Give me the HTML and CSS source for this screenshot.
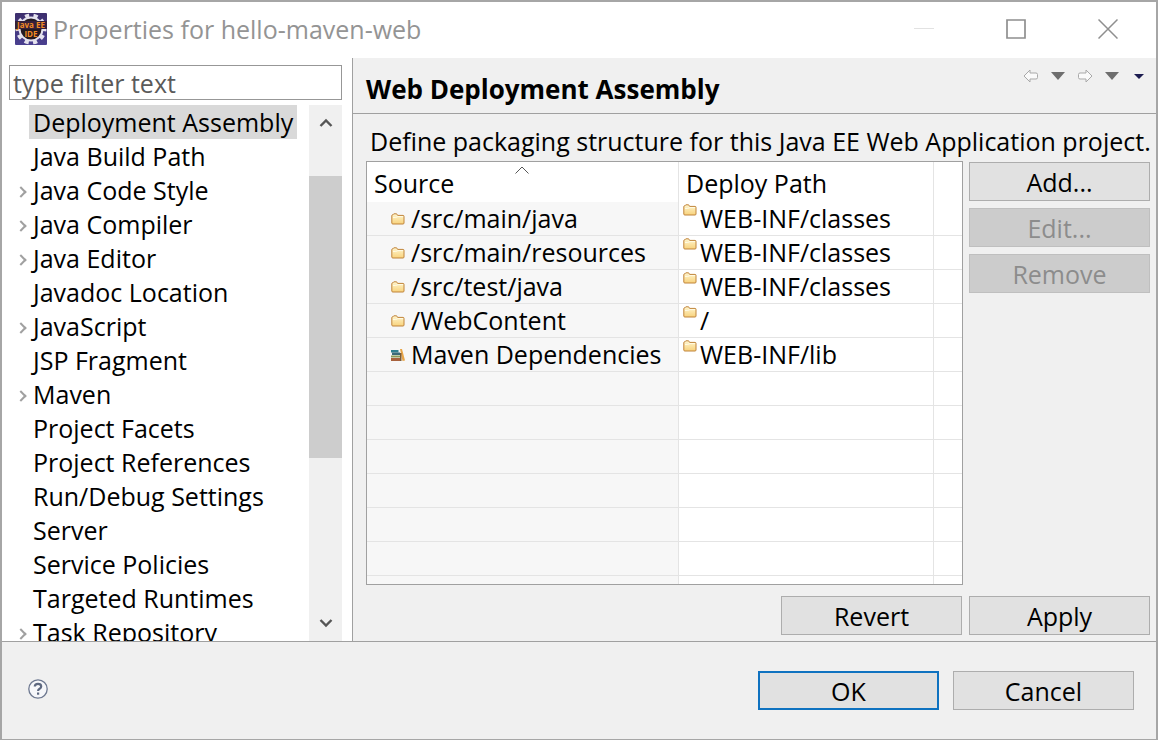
FILE: index.html
```html
<!DOCTYPE html>
<html lang="en">
<head>
<meta charset="utf-8">
<title>Properties for hello-maven-web</title>
<link rel="stylesheet" href="styles.css">
</head>
<body>
<svg class="defs" width="0" height="0" aria-hidden="true">
  <defs>
    <linearGradient id="folder-fill" x1="0" y1="0" x2="0" y2="1">
      <stop offset="0" stop-color="#fff6cf"/>
      <stop offset="1" stop-color="#f8d27c"/>
    </linearGradient>
    <linearGradient id="app-fill" x1="0" y1="0" x2="0" y2="1">
      <stop offset="0" stop-color="#3d2f6d"/>
      <stop offset="1" stop-color="#4a4090"/>
    </linearGradient>
    <symbol id="folder" viewBox="0 0 14 12">
      <path d="M.8 10V2.6Q.8 1.8 1.6 1.8H2L2.8.8H5.6L6.6 2.4H12Q13 2.4 13 3.4V10Q13 11 12 11H1.8Q.8 11 .8 10Z" fill="url(#folder-fill)" stroke="#c0843a"/>
      <path d="M2 4.5Q5 4.8 7 3.6H12" fill="none" stroke="#fffbe6"/>
    </symbol>
    <symbol id="arrow-left" viewBox="0 0 16 14">
      <path d="M1 7 7 1V4H13Q14.500 4 14.500 5.500V8.500Q14.500 10 13 10H7V13Z" fill="#fafafa" stroke="#a9a9a9"/>
    </symbol>
  </defs>
</svg>
<div class="window">
  <header class="titlebar">
    <svg class="app-icon" viewBox="0 0 32 32" aria-hidden="true">
      <rect width="32" height="32" rx="1" fill="url(#app-fill)"/>
      <circle cx="16" cy="16" r="13" fill="none" stroke="#e4e2ee" stroke-width="5" stroke-dasharray="4.080 4.080" transform="rotate(-9 16 16)"/>
      <circle cx="16" cy="16" r="11.500" fill="#241a22" stroke="#e4e2ee" stroke-width="2"/>
      <rect y="8" width="32" height="8" fill="#35203a"/>
      <text x="16" y="15" class="app-word">Java EE</text>
      <text x="16" y="24" class="app-word">IDE</text>
    </svg>
    <h1 class="title">Properties for hello-maven-web</h1>
    <div class="window-controls">
      <button type="button" aria-label="Minimize" disabled><svg viewBox="0 0 20 20"><path d="M0 9.500H20" stroke="#e2e2e2"/></svg></button>
      <button type="button" aria-label="Maximize"><svg viewBox="0 0 20 20"><path d="M1 1H19V19H1Z" fill="none" stroke="#8f8f8f" stroke-width="1.700"/></svg></button>
      <button type="button" aria-label="Close"><svg viewBox="0 0 20 20"><path d="M.5.500 19.500 19.500M19.500.500.500 19.500" stroke="#8f8f8f" stroke-width="1.500"/></svg></button>
    </div>
  </header>

  <div class="body">
    <nav class="sidebar" aria-label="Property pages">
      <input class="filter" type="text" placeholder="type filter text" aria-label="type filter text">
      <div class="tree-area">
        <ul class="tree">
          <li><a href="#" class="selected">Deployment Assembly</a></li>
          <li><a href="#">Java Build Path</a></li>
          <li class="branch"><a href="#">Java Code Style</a></li>
          <li class="branch"><a href="#">Java Compiler</a></li>
          <li class="branch"><a href="#">Java Editor</a></li>
          <li><a href="#">Javadoc Location</a></li>
          <li class="branch"><a href="#">JavaScript</a></li>
          <li><a href="#">JSP Fragment</a></li>
          <li class="branch"><a href="#">Maven</a></li>
          <li><a href="#">Project Facets</a></li>
          <li><a href="#">Project References</a></li>
          <li><a href="#">Run/Debug Settings</a></li>
          <li><a href="#">Server</a></li>
          <li><a href="#">Service Policies</a></li>
          <li><a href="#">Targeted Runtimes</a></li>
          <li class="branch"><a href="#">Task Repository</a></li>
        </ul>
        <div class="scrollbar">
          <button type="button" aria-label="Scroll up"><svg viewBox="0 0 14 10"><path d="M1.500 8 7 2.500 12.500 8" fill="none" stroke="#555" stroke-width="2.400"/></svg></button>
          <div class="track"><div class="thumb"></div></div>
          <button type="button" aria-label="Scroll down"><svg viewBox="0 0 14 10"><path d="M1.500 2 7 7.500 12.500 2" fill="none" stroke="#555" stroke-width="2.400"/></svg></button>
        </div>
      </div>
    </nav>

    <main class="page">
      <div class="page-head">
        <h2>Web Deployment Assembly</h2>
        <div class="history">
          <button type="button" aria-label="Back"><svg width="16" height="14"><use href="#arrow-left"/></svg></button>
          <button type="button" aria-label="Back history"><svg width="14" height="8" viewBox="0 0 14 8"><path d="M0 0H14L7 8Z" fill="#6e6e6e"/></svg></button>
          <button type="button" aria-label="Forward"><svg class="flip" width="16" height="14"><use href="#arrow-left"/></svg></button>
          <button type="button" aria-label="Forward history"><svg width="14" height="8" viewBox="0 0 14 8"><path d="M0 0H14L7 8Z" fill="#6e6e6e"/></svg></button>
          <button type="button" class="menu" aria-label="Menu"><svg width="10" height="5" viewBox="0 0 10 5"><path d="M0 0H10L5 5Z" fill="#1c1c50"/></svg></button>
        </div>
      </div>
      <p class="description">Define packaging structure for this Java EE Web Application project.</p>
      <div class="editor">
        <div class="table-box">
          <table>
            <colgroup><col class="col-source"><col class="col-deploy"><col></colgroup>
            <thead>
              <tr>
                <th scope="col">Source<svg class="sort" viewBox="0 0 14 8" aria-hidden="true"><path d="M.5 7.500 7 1 13.500 7.500" fill="none" stroke="#555"/></svg></th>
                <th scope="col">Deploy Path</th>
                <td></td>
              </tr>
            </thead>
            <tbody>
              <tr><td><div class="source"><svg><use href="#folder"/></svg>/src/main/java</div></td><td><div class="deploy"><svg><use href="#folder"/></svg>WEB-INF/classes</div></td><td></td></tr>
              <tr><td><div class="source"><svg><use href="#folder"/></svg>/src/main/resources</div></td><td><div class="deploy"><svg><use href="#folder"/></svg>WEB-INF/classes</div></td><td></td></tr>
              <tr><td><div class="source"><svg><use href="#folder"/></svg>/src/test/java</div></td><td><div class="deploy"><svg><use href="#folder"/></svg>WEB-INF/classes</div></td><td></td></tr>
              <tr><td><div class="source"><svg><use href="#folder"/></svg>/WebContent</div></td><td><div class="deploy"><svg><use href="#folder"/></svg>/</div></td><td></td></tr>
              <tr><td><div class="source"><svg viewBox="0 0 14 12"><path d="M0 1H7.500V3.500H0Z" fill="#2f7f8f"/><path d="M1 3.500H9V6H1Z" fill="#3c6a78"/><path d="M0 6.500H9V8.500H0Z" fill="#8a9a58"/><path d="M0 9H10V12H0Z" fill="#a8623c"/><path d="M9 0H11L14 11.500 11.500 12Z" fill="#e8a548"/><path d="M9 4H10.500V12H9Z" fill="#7a5a36"/></svg>Maven Dependencies</div></td><td><div class="deploy"><svg><use href="#folder"/></svg>WEB-INF/lib</div></td><td></td></tr>
              <tr><td></td><td></td><td></td></tr>
              <tr><td></td><td></td><td></td></tr>
              <tr><td></td><td></td><td></td></tr>
              <tr><td></td><td></td><td></td></tr>
              <tr><td></td><td></td><td></td></tr>
              <tr><td></td><td></td><td></td></tr>
              <tr><td></td><td></td><td></td></tr>
            </tbody>
          </table>
        </div>
        <div class="side-buttons">
          <button type="button" class="btn">Add...</button>
          <button type="button" class="btn" disabled>Edit...</button>
          <button type="button" class="btn" disabled>Remove</button>
        </div>
      </div>
      <div class="page-actions">
        <button type="button" class="btn">Revert</button>
        <button type="button" class="btn">Apply</button>
      </div>
    </main>
  </div>

  <footer class="footer">
    <button type="button" class="help" aria-label="Help">
      <svg viewBox="0 0 20 20"><circle cx="10" cy="10" r="9.200" fill="#f6f7fa" stroke="#6d7890" stroke-width="1.300"/><path d="M6.800 7.600Q6.800 4.800 10 4.800T13.200 7.400Q13.200 8.800 11.600 9.800T10.100 12" fill="none" stroke="#5d6880" stroke-width="2.200"/><rect x="9" y="13.500" width="2.200" height="2.200" fill="#5d6880"/></svg>
    </button>
    <div class="dialog-actions">
      <button type="button" class="btn primary">OK</button>
      <button type="button" class="btn">Cancel</button>
    </div>
  </footer>
</div>
</body>
</html>
```
FILE: styles.css
```css
* {
  box-sizing: border-box;
}

body {
  margin: 0;
  font: 25px/34px "Open Sans", "Noto Sans", sans-serif;
  color: #000;
}

h1, h2, p, ul {
  margin: 0;
  padding: 0;
}

button, input {
  font: inherit;
  color: inherit;
}

button {
  padding: 0;
  border: 0;
  background: none;
}

svg {
  display: block;
}

.defs {
  position: absolute;
}

.window {
  display: flex;
  flex-direction: column;
  height: 100vh;
  border: 2px solid #a6a6a6;
  border-bottom-width: 1px;
  background: #fff;
}

.titlebar {
  display: flex;
  flex: none;
  align-items: center;
  height: 56px;
  padding: 0 2px 2px 13px;
}

.app-icon {
  width: 32px;
  height: 32px;
  margin-right: 6px;
}

.app-word {
  fill: #f08a24;
  font-size: 8px;
  font-weight: 700;
  text-anchor: middle;
}

.title {
  flex: 1;
  font-size: 25px;
  font-weight: 400;
  color: #949494;
}

.window-controls {
  display: flex;
}

.window-controls button {
  display: grid;
  place-items: center;
  width: 92px;
  height: 54px;
}

.window-controls svg {
  width: 20px;
  height: 20px;
}

.body {
  display: flex;
  flex: 1;
  min-height: 0;
}

.sidebar {
  display: flex;
  flex: none;
  flex-direction: column;
  gap: 5px;
  width: 350px;
  padding: 7px 10px 0 7px;
}

.filter {
  flex: none;
  width: 100%;
  height: 35px;
  padding: 0 3px;
  border: 1px solid #979797;
  border-radius: 0;
  background: #fff;
}

.filter::placeholder {
  color: #5a5a5a;
  opacity: 1;
}

.tree-area {
  display: flex;
  flex: 1;
  min-height: 0;
}

.tree {
  flex: 1;
  overflow: hidden;
  list-style: none;
}

.tree li {
  position: relative;
  height: 34px;
  padding-left: 20px;
}

.tree a {
  display: inline-block;
  padding: 0 4px;
  color: inherit;
  text-decoration: none;
}

.tree .selected {
  background: #d9d9d9;
}

.branch::before {
  content: "";
  position: absolute;
  top: 15px;
  left: 8px;
  width: 6px;
  height: 6px;
  border: solid #a0a0a0;
  border-width: 2px 2px 0 0;
  transform: rotate(45deg);
}

.scrollbar {
  display: flex;
  flex: none;
  flex-direction: column;
  width: 33px;
  background: #f0f0f0;
}

.scrollbar button {
  display: grid;
  place-items: center;
  height: 36px;
}

.scrollbar svg {
  width: 14px;
  height: 10px;
}

.track {
  flex: 1;
  padding-top: 35px;
}

.thumb {
  height: 282px;
  background: #cdcdcd;
}

.page {
  display: flex;
  flex: 1;
  flex-direction: column;
  min-width: 0;
  border-left: 1px solid #a0a0a0;
  background: #f0f0f0;
}

.page-head {
  display: flex;
  flex: none;
  justify-content: space-between;
  height: 56px;
  padding: 14px 12px 0 13px;
  border-bottom: 1px solid #a0a0a0;
}

.page-head h2 {
  font-size: 26px;
  font-weight: 700;
}

.history {
  display: flex;
  gap: 12px;
  height: 8px;
  align-items: center;
}

.history .menu {
  margin-left: 3px;
}

.flip {
  transform: scaleX(-1);
}

.description {
  flex: none;
  height: 47px;
  padding: 10px 0 0 17px;
  white-space: nowrap;
}

.editor {
  display: flex;
  flex: 1;
  gap: 6px;
  min-height: 0;
  padding: 0 6px 0 13px;
}

.table-box {
  flex: 1;
  min-width: 0;
  overflow: hidden;
  border: 1px solid #a0a0a0;
  background: #fff;
}

table {
  width: 100%;
  table-layout: fixed;
  border-collapse: separate;
  border-spacing: 0;
}

.col-source {
  width: 312px;
}

.col-deploy {
  width: 255px;
}

th, td {
  height: 34px;
  padding: 0;
  border: solid #e4e4e4;
  border-width: 0 1px 1px 0;
  font-weight: 400;
  text-align: left;
  line-height: 33px;
  white-space: nowrap;
}

tr > :last-child {
  border-right: 0;
}

thead th, thead td {
  position: relative;
  height: 40px;
  padding: 2px 7px 0;
  border-bottom: 0;
}

.sort {
  position: absolute;
  top: 4px;
  left: 148px;
  width: 14px;
  height: 8px;
}

tbody td:first-child {
  background: #f7f7f7;
}

.source, .deploy {
  display: flex;
  height: 33px;
}

.source {
  gap: 6px;
  align-items: center;
  padding-left: 24px;
}

.deploy {
  gap: 3px;
  padding-left: 4px;
}

.source svg, .deploy svg {
  flex: none;
  width: 14px;
  height: 12px;
}

.deploy svg {
  margin-top: 2px;
}

.side-buttons {
  display: flex;
  flex-direction: column;
  gap: 7px;
  padding-top: 1px;
}

.btn {
  width: 181px;
  height: 39px;
  border: 1px solid #adadad;
  background: #e1e1e1;
}

.btn:disabled {
  border-color: #bfbfbf;
  background: #ccc;
  color: #8c8c8c;
}

.btn.primary {
  border: 2px solid #0f72c0;
}

.page-actions {
  display: flex;
  flex: none;
  gap: 7px;
  justify-content: flex-end;
  padding: 11px 6px 6px;
}

.footer {
  display: flex;
  flex: none;
  align-items: center;
  justify-content: space-between;
  height: 98px;
  padding: 0 22px 0 26px;
  border-top: 1px solid #a0a0a0;
  background: #f0f0f0;
}

.help {
  padding-bottom: 4px;
}

.help svg {
  width: 20px;
  height: 20px;
}

.dialog-actions {
  display: flex;
  gap: 14px;
}
```
